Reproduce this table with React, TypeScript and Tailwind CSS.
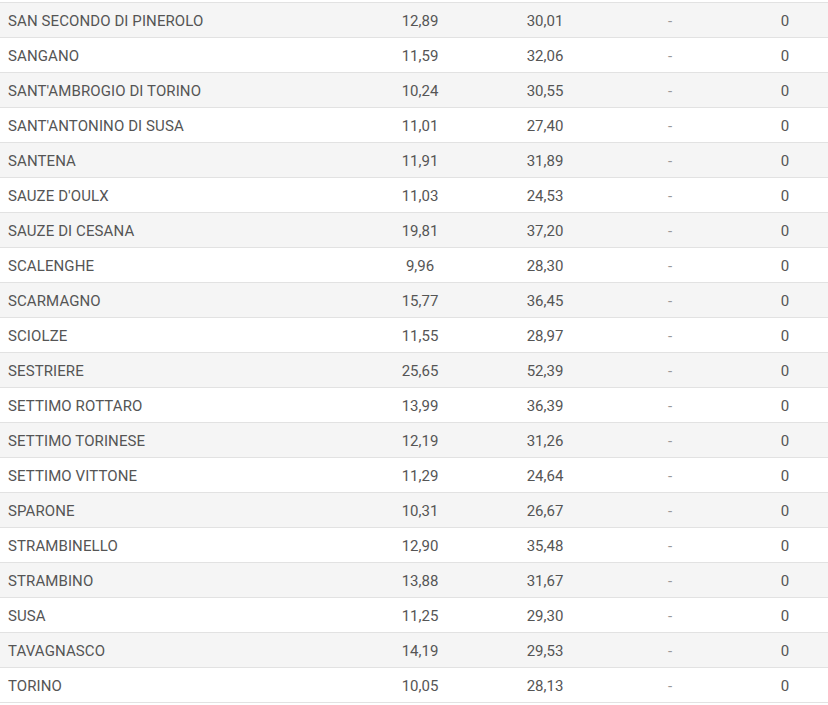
import React from 'react';

type Row = { name: string; a: string; b: string; c: string; d: string };

const rows: Row[] = [
  { name: 'SAN SECONDO DI PINEROLO', a: '12,89', b: '30,01', c: '-', d: '0' },
  { name: 'SANGANO', a: '11,59', b: '32,06', c: '-', d: '0' },
  { name: "SANT'AMBROGIO DI TORINO", a: '10,24', b: '30,55', c: '-', d: '0' },
  { name: "SANT'ANTONINO DI SUSA", a: '11,01', b: '27,40', c: '-', d: '0' },
  { name: 'SANTENA', a: '11,91', b: '31,89', c: '-', d: '0' },
  { name: "SAUZE D'OULX", a: '11,03', b: '24,53', c: '-', d: '0' },
  { name: 'SAUZE DI CESANA', a: '19,81', b: '37,20', c: '-', d: '0' },
  { name: 'SCALENGHE', a: '9,96', b: '28,30', c: '-', d: '0' },
  { name: 'SCARMAGNO', a: '15,77', b: '36,45', c: '-', d: '0' },
  { name: 'SCIOLZE', a: '11,55', b: '28,97', c: '-', d: '0' },
  { name: 'SESTRIERE', a: '25,65', b: '52,39', c: '-', d: '0' },
  { name: 'SETTIMO ROTTARO', a: '13,99', b: '36,39', c: '-', d: '0' },
  { name: 'SETTIMO TORINESE', a: '12,19', b: '31,26', c: '-', d: '0' },
  { name: 'SETTIMO VITTONE', a: '11,29', b: '24,64', c: '-', d: '0' },
  { name: 'SPARONE', a: '10,31', b: '26,67', c: '-', d: '0' },
  { name: 'STRAMBINELLO', a: '12,90', b: '35,48', c: '-', d: '0' },
  { name: 'STRAMBINO', a: '13,88', b: '31,67', c: '-', d: '0' },
  { name: 'SUSA', a: '11,25', b: '29,30', c: '-', d: '0' },
  { name: 'TAVAGNASCO', a: '14,19', b: '29,53', c: '-', d: '0' },
  { name: 'TORINO', a: '10,05', b: '28,13', c: '-', d: '0' },
];

export default function App() {
  return (
    <div className="w-[828px] h-[705px] bg-white overflow-hidden pt-[2px] font-['Roboto',sans-serif] text-[15px] text-[#555]">
      <div className="border-b border-[#e2e2e2]">
        {rows.map((r, i) => (
          <div
            key={r.name}
            className={`grid grid-cols-[357px_126px_124px_126px_1fr] items-center h-[35px] pt-[2px] border-t border-[#e2e2e2] ${
              i % 2 === 0 ? 'bg-[#f5f5f5]' : 'bg-white'
            }`}
          >
            <div className="pl-[8px] whitespace-nowrap tracking-[0.1px]">{r.name}</div>
            <div className="text-center">{r.a}</div>
            <div className="text-center">{r.b}</div>
            <div className="text-center text-[#999]">{r.c}</div>
            <div className="text-center pl-[9px]">{r.d}</div>
          </div>
        ))}
      </div>
    </div>
  );
}
